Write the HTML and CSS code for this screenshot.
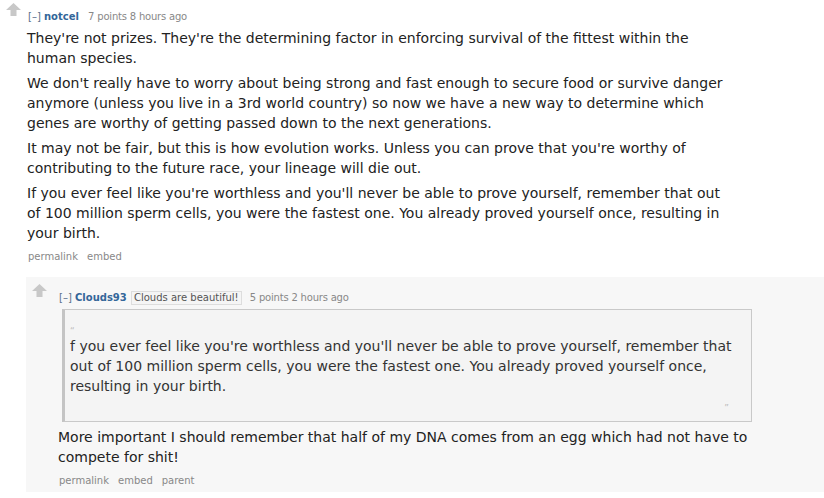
FILE: index.html
```html
<!DOCTYPE html>
<html>
<head>
<meta charset="utf-8">
<link rel="stylesheet" href="styles.css">
</head>
<body>
<div class="comment">
  <div class="midcol">
    <svg class="arrow" width="15" height="13" viewBox="0 0 15 13"><path d="M7.5 0 L15 7 L10.5 7 L10.5 13 L4.5 13 L4.5 7 L0 7 Z" fill="#c8c8c8"/></svg>
  </div>
  <div class="entry">
    <p class="tagline"><span class="expand">[–]</span> <span class="author">notcel</span> <span class="score">7 points 8 hours ago</span></p>
    <div class="md md-top">
      <p>They're not prizes. They're the determining factor in enforcing survival of the fittest within the human species.</p>
      <p>We don't really have to worry about being strong and fast enough to secure food or survive danger anymore (unless you live in a 3rd world country) so now we have a new way to determine which genes are worthy of getting passed down to the next generations.</p>
      <p>It may not be fair, but this is how evolution works. Unless you can prove that you're worthy of contributing to the future race, your lineage will die out.</p>
      <p>If you ever feel like you're worthless and you'll never be able to prove yourself, remember that out of 100 million sperm cells, you were the fastest one. You already proved yourself once, resulting in your birth.</p>
    </div>
    <ul class="buttons"><li>permalink</li><li>embed</li></ul>
  </div>
</div>
<div class="comment child">
  <div class="midcol">
    <svg class="arrow" width="15" height="13" viewBox="0 0 15 13"><path d="M7.5 0 L15 7 L10.5 7 L10.5 13 L4.5 13 L4.5 7 L0 7 Z" fill="#c8c8c8"/></svg>
  </div>
  <div class="entry">
    <p class="tagline"><span class="expand">[–]</span> <span class="author">Clouds93</span> <span class="flair">Clouds are beautiful!</span> <span class="score">5 points 2 hours ago</span></p>
    <div class="md md-child">
      <blockquote>
        <div class="qmark">“</div>
        <p>f you ever feel like you're worthless and you'll never be able to prove yourself, remember that out of 100 million sperm cells, you were the fastest one. You already proved yourself once, resulting in your birth.</p>
        <div class="qmark qend">”</div>
      </blockquote>
      <p>More important I should remember that half of my DNA comes from an egg which had not have to compete for shit!</p>
    </div>
    <ul class="buttons"><li>permalink</li><li>embed</li><li>parent</li></ul>
  </div>
</div>
</body>
</html>
```
FILE: styles.css
```css
html, body {
  margin: 0;
  padding: 0;
  background: #ffffff;
  font-family: "DejaVu Sans", Verdana, sans-serif;
  color: #222222;
}

.comment {
  display: flex;
  align-items: flex-start;
}

.midcol {
  width: 27px;
  flex: none;
  padding-top: 3px;
}

.arrow {
  display: block;
  margin-left: 6px;
}

.entry {
  flex: none;
}

.tagline {
  margin: 10px 0 0 1px;
  font-size: 10px;
  line-height: 14px;
  color: #888888;
}

.expand {
  color: #5a6f8c;
}

.author {
  color: #336699;
  font-weight: bold;
  margin-right: 1px;
}

.score {
  margin-left: 5px;
  letter-spacing: -0.2px;
}

.flair {
  display: inline-block;
  background: #f5f5f5;
  border: 1px solid #dddddd;
  color: #545454;
  padding: 0 2px;
  line-height: 12px;
}

.md {
  margin-top: 4px;
  font-size: 14px;
  line-height: 20px;
  color: #222222;
}

.md p {
  margin: 0 0 5px 0;
}

.md-top {
  width: 700px;
}

.md-child {
  width: 694px;
}

.buttons {
  list-style: none;
  margin: 7px 0 0 1px;
  padding: 0;
  display: flex;
  gap: 9px;
  font-size: 10px;
  line-height: 14px;
  color: #888888;
}

.child {
  margin: 13px 0 0 26px;
  background: #f7f7f7;
  padding-bottom: 4px;
}

.child .midcol {
  width: 32px;
  padding-top: 7px;
}

.child .tagline {
  margin-top: 14px;
}

.child .md {
  margin-top: 4px;
}

.child .buttons {
  margin-top: 7px;
}

blockquote {
  margin: 0 0 5px 4px;
  padding: 0 6px 8px 5px;
  background: #f4f4f4;
  border: 1px solid #c9c9c9;
  border-left: 3px solid #c4c4c4;
  color: #333333;
}

blockquote p {
  margin: 0;
}

.qmark {
  font-size: 9px;
  line-height: 10px;
  color: #bbbbbb;
  padding-top: 16px;
}

.qend {
  padding-top: 2px;
  text-align: right;
  margin-right: 16px;
}
```
